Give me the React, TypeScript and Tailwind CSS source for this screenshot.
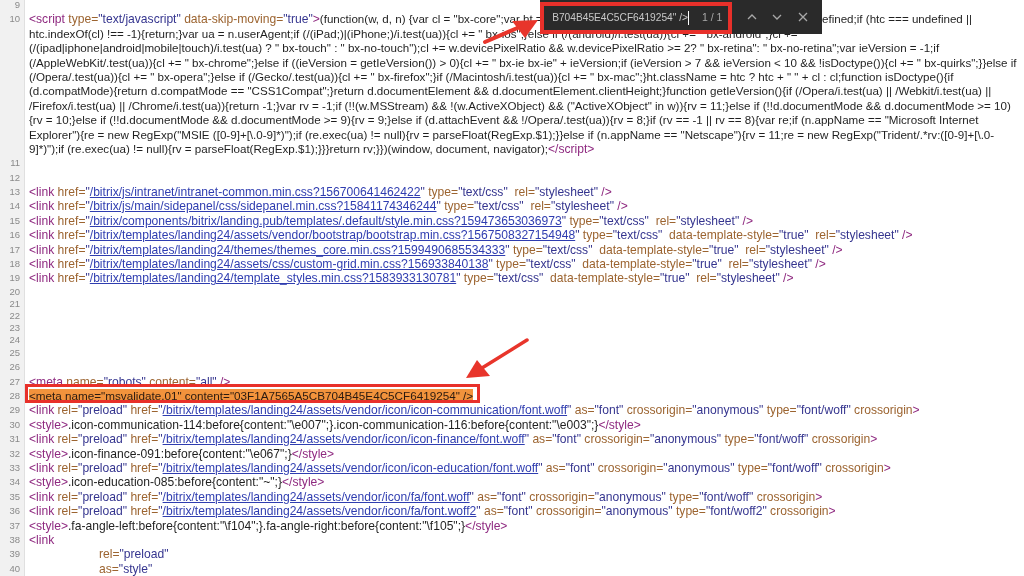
const NAME = "text-[#8f2a80]";
const ATTR = "text-[#9c6430]";
const VAL = "text-[#35358f]";
const LINK = "text-[#2f3db0] underline";
const TXT = "text-[#1f1f1f]";
const BODY = "text-[#1f1f1f] text-[11.6px]";

type Seg = [string, string];

function Row({ n, segs, indent, hl, short }: { n?: number; segs?: Seg[]; indent?: boolean; hl?: boolean; short?: boolean }) {
  return (
    <div className={`flex ${short ? "h-[12px] leading-[12px]" : "h-[14.4px] leading-[14.4px]"}`}>
      <div className="w-[25px] shrink-0 bg-[#f1f1f1] border-r border-[#e0e0e0] pr-[4px] text-right text-[9.5px] text-[#8a8a8a]">{n}</div>
      <div className={`pl-[4px] whitespace-pre ${indent ? "ml-[70px]" : ""}`}>
        {hl ? (
          <span className="bg-[#f2933c] text-[#2a1a10] text-[11.7px]">{segs?.map((s, i) => <span key={i}>{s[1]}</span>)}</span>
        ) : (
          segs?.map((s, i) => <span key={i} className={s[0]}>{s[1]}</span>)
        )}
      </div>
    </div>
  );
}

function Plain({ text }: { text?: React.ReactNode }) {
  return (
    <div className="flex h-[14.4px] leading-[14.4px]">
      <div className="w-[25px] shrink-0 bg-[#f1f1f1] border-r border-[#e0e0e0]" />
      <div className={`pl-[4px] whitespace-pre ${BODY}`}>{text}</div>
    </div>
  );
}

const cssLink = (href: string, tail: Seg[]): Seg[] => [
  [NAME, "<link "],
  [ATTR, "href="],
  [VAL, '"'],
  [LINK, href],
  [VAL, '"'],
  ...tail,
];

const t = (a: string, v: string): Seg[] => [[ATTR, " " + a + "="], [VAL, '"' + v + '"']];
const end: Seg = [NAME, " />"];
const tpl: Seg[] = [...t("type", "text/css"), ...t(" data-template-style", "true"), ...t(" rel", "stylesheet"), end];
const plainCss: Seg[] = [...t("type", "text/css"), ...t(" rel", "stylesheet"), end];
const preload = (href: string, tail: Seg[]): Seg[] => [
  [NAME, "<link "],
  [ATTR, "rel="],
  [VAL, '"preload"'],
  [ATTR, " href="],
  [VAL, '"'],
  [LINK, href],
  [VAL, '"'],
  ...tail,
];
const woff: Seg[] = [...t("as", "font"), ...t("crossorigin", "anonymous"), ...t("type", "font/woff"), [ATTR, " crossorigin"], [NAME, ">"]];
const woff2: Seg[] = [...t("as", "font"), ...t("crossorigin", "anonymous"), ...t("type", "font/woff2"), [ATTR, " crossorigin"], [NAME, ">"]];
const style = (body: string): Seg[] => [[NAME, "<style>"], [TXT, body], [NAME, "</style>"]];

export default function App() {
  return (
    <div className="relative w-[1024px] h-[576px] overflow-hidden bg-white font-['Liberation_Sans',sans-serif] text-[12.1px] blur-[0.3px]">
      <div className="-mt-[2px]">
        <Row n={9} />
        <Row n={10} segs={[[NAME, "<script "], [ATTR, "type="], [VAL, '"text/javascript"'], [ATTR, " data-skip-moving="], [VAL, '"true"'], [NAME, ">"], [BODY, '(function(w, d, n) {var cl = "bx-core";var ht = d.documentElement;var htc = ht ? ht.className : undefined;if (htc === undefined ||']]} />
        <Plain text={'htc.indexOf(cl) !== -1){return;}var ua = n.userAgent;if (/(iPad;)|(iPhone;)/i.test(ua)){cl += " bx-ios";}else if (/(android)/i.test(ua)){cl += " bx-android";}cl +='} />
        <Plain text={'(/(ipad|iphone|android|mobile|touch)/i.test(ua) ? " bx-touch" : " bx-no-touch");cl += w.devicePixelRatio && w.devicePixelRatio >= 2? " bx-retina": " bx-no-retina";var ieVersion = -1;if'} />
        <Plain text={'(/AppleWebKit/.test(ua)){cl += " bx-chrome";}else if ((ieVersion = getIeVersion()) > 0){cl += " bx-ie bx-ie" + ieVersion;if (ieVersion > 7 && ieVersion < 10 && !isDoctype()){cl += " bx-quirks";}}else if'} />
        <Plain text={'(/Opera/.test(ua)){cl += " bx-opera";}else if (/Gecko/.test(ua)){cl += " bx-firefox";}if (/Macintosh/i.test(ua)){cl += " bx-mac";}ht.className = htc ? htc + " " + cl : cl;function isDoctype(){if'} />
        <Plain text={'(d.compatMode){return d.compatMode == "CSS1Compat";}return d.documentElement && d.documentElement.clientHeight;}function getIeVersion(){if (/Opera/i.test(ua) || /Webkit/i.test(ua) ||'} />
        <Plain text={'/Firefox/i.test(ua) || /Chrome/i.test(ua)){return -1;}var rv = -1;if (!!(w.MSStream) && !(w.ActiveXObject) && ("ActiveXObject" in w)){rv = 11;}else if (!!d.documentMode && d.documentMode >= 10)'} />
        <Plain text={'{rv = 10;}else if (!!d.documentMode && d.documentMode >= 9){rv = 9;}else if (d.attachEvent && !/Opera/.test(ua)){rv = 8;}if (rv == -1 || rv == 8){var re;if (n.appName == "Microsoft Internet'} />
        <Plain text={'Explorer"){re = new RegExp("MSIE ([0-9]+[\\.0-9]*)");if (re.exec(ua) != null){rv = parseFloat(RegExp.$1);}}else if (n.appName == "Netscape"){rv = 11;re = new RegExp("Trident/.*rv:([0-9]+[\\.0-'} />
        <Row segs={[[BODY, '9]*)");if (re.exec(ua) != null){rv = parseFloat(RegExp.$1);}}}return rv;}})(window, document, navigator);'], [NAME, "</script>"]]} />
        <Row n={11} />
        <Row n={12} />
        <Row n={13} segs={cssLink("/bitrix/js/intranet/intranet-common.min.css?156700641462422", plainCss)} />
        <Row n={14} segs={cssLink("/bitrix/js/main/sidepanel/css/sidepanel.min.css?15841174346244", plainCss)} />
        <Row n={15} segs={cssLink("/bitrix/components/bitrix/landing.pub/templates/.default/style.min.css?159473653036973", plainCss)} />
        <Row n={16} segs={cssLink("/bitrix/templates/landing24/assets/vendor/bootstrap/bootstrap.min.css?1567508327154948", tpl)} />
        <Row n={17} segs={cssLink("/bitrix/templates/landing24/themes/themes_core.min.css?1599490685534333", tpl)} />
        <Row n={18} segs={cssLink("/bitrix/templates/landing24/assets/css/custom-grid.min.css?156933840138", tpl)} />
        <Row n={19} segs={cssLink("/bitrix/templates/landing24/template_styles.min.css?1583933130781", tpl)} />
        <Row n={20} short />
        <Row n={21} short />
        <Row n={22} short />
        <Row n={23} short />
        <Row n={24} short />
        <Row n={25} />
        <Row n={26} />
        <Row n={27} segs={[[NAME, "<meta "], [ATTR, "name="], [VAL, '"robots"'], [ATTR, " content="], [VAL, '"all"'], end]} />
        <Row n={28} hl segs={[[NAME, '<meta name="msvalidate.01" content="03F1A7565A5CB704B45E4C5CF6419254" />']]} />
        <Row n={29} segs={preload("/bitrix/templates/landing24/assets/vendor/icon/icon-communication/font.woff", woff)} />
        <Row n={30} segs={style('.icon-communication-114:before{content:"\\e007";}.icon-communication-116:before{content:"\\e003";}')} />
        <Row n={31} segs={preload("/bitrix/templates/landing24/assets/vendor/icon/icon-finance/font.woff", woff)} />
        <Row n={32} segs={style('.icon-finance-091:before{content:"\\e067";}')} />
        <Row n={33} segs={preload("/bitrix/templates/landing24/assets/vendor/icon/icon-education/font.woff", woff)} />
        <Row n={34} segs={style('.icon-education-085:before{content:"~";}')} />
        <Row n={35} segs={preload("/bitrix/templates/landing24/assets/vendor/icon/fa/font.woff", woff)} />
        <Row n={36} segs={preload("/bitrix/templates/landing24/assets/vendor/icon/fa/font.woff2", woff2)} />
        <Row n={37} segs={style('.fa-angle-left:before{content:"\\f104";}.fa-angle-right:before{content:"\\f105";}')} />
        <Row n={38} segs={[[NAME, "<link"]]} />
        <Row n={39} indent segs={[[ATTR, "rel="], [VAL, '"preload"']]} />
        <Row n={40} indent segs={[[ATTR, "as="], [VAL, '"style"']]} />
        <Row indent segs={[[ATTR, "href="], [VAL, '"/bitrix/templates/landing24/assets/css/custom-grid.min.css"']]} />
      </div>

      {/* find bar */}
      <div className="absolute left-[540px] top-0 w-[282px] h-[34px] bg-[#2a2a2a] flex items-center">
        <div className="w-[192px] h-[32px] mt-[1px] border-[4px] border-[#e8302a] flex items-center pl-[9px] text-[10.2px] text-[#c8c8c8]">
          <div className="w-[135px] overflow-hidden flex justify-end whitespace-pre shrink-0">
            <span>B704B45E4C5CF6419254" /&gt;</span>
          </div>
          <div className="w-[1px] h-[14px] bg-white shrink-0" />
          <span className="ml-[13px] text-[10.5px] text-[#a8a8a8] whitespace-pre">1 / 1</span>
        </div>
        <svg className="ml-[15px]" width="64" height="14" viewBox="0 0 64 14" fill="none" stroke="#a8a8a8" strokeWidth="1.3">
          <path d="M1 9l4-4 4 4" />
          <path d="M26 5l4 4 4-4" />
          <path d="M52 3l8 8M60 3l-8 8" />
        </svg>
      </div>

      {/* arrows */}
      <svg className="absolute left-0 top-0 pointer-events-none" width="1024" height="576" viewBox="0 0 1024 576" fill="none">
        <path d="M485 42L522 26" stroke="#e8352b" strokeWidth="4" strokeLinecap="round" />
        <path d="M538 20L512 21L525 38Z" fill="#e8352b" />
        <path d="M527 340L482 368" stroke="#e8352b" strokeWidth="3.5" strokeLinecap="round" />
        <path d="M466 378L477 360L490 376Z" fill="#e8352b" />
        <rect x="26.5" y="385.5" width="452" height="16" stroke="#e8302a" strokeWidth="3" />
      </svg>
    </div>
  );
}
